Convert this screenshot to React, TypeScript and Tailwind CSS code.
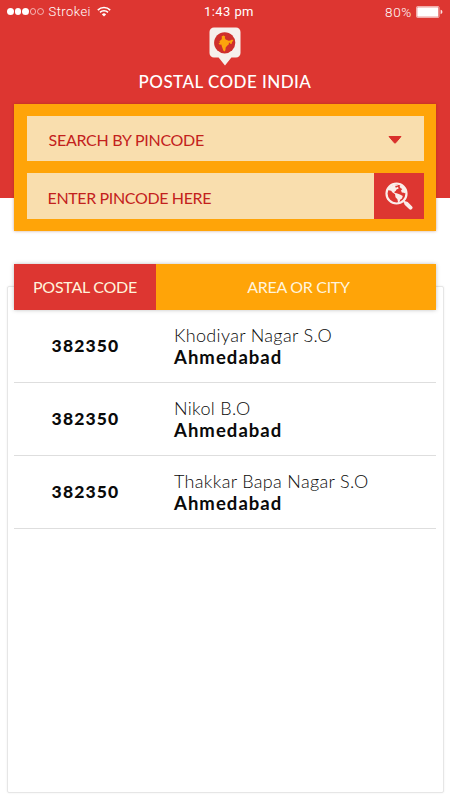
import { clsx } from "clsx";

interface PostalRecord {
  code: string;
  area: string;
  city: string;
}

const records: PostalRecord[] = [
  { code: "382350", area: "Khodiyar Nagar S.O", city: "Ahmedabad" },
  { code: "382350", area: "Nikol B.O", city: "Ahmedabad" },
  { code: "382350", area: "Thakkar Bapa Nagar S.O", city: "Ahmedabad" },
];

function SignalDots() {
  return (
    <div className="flex gap-px">
      {[true, true, true, false, false].map((filled, i) => (
        <span
          key={i}
          className={clsx("h-[6.5px] w-[6.5px] rounded-full border border-white/60", filled && "bg-white")}
        />
      ))}
    </div>
  );
}

function WifiIcon() {
  return (
    <svg width="14" height="11" viewBox="0 0 14 11" fill="none" stroke="#fff" strokeWidth="1.6">
      <path d="M0.8 4.1a8.8 8.8 0 0 1 12.4 0" />
      <path d="M3 6.4a5.7 5.7 0 0 1 8 0" />
      <path d="M7 10.6L4.9 8.4a3 3 0 0 1 4.2 0z" fill="#fff" stroke="none" />
    </svg>
  );
}

function BatteryIcon() {
  return (
    <svg width="28" height="12" viewBox="0 0 28 12">
      <rect x="0.5" y="0.5" width="22.5" height="11" rx="1" fill="none" stroke="#fff" strokeOpacity="0.6" />
      <rect x="1.2" y="1.2" width="21" height="9.6" rx="0.5" fill="#fff" />
      <path d="M24.6 3.8c2.4 0.6 2.4 3.8 0 4.4z" fill="#fff" fillOpacity="0.85" />
    </svg>
  );
}

function StatusBar() {
  return (
    <div className="grid h-[23px] grid-cols-3 items-center pl-[7px] pr-[6px] text-[13px] text-white">
      <div className="flex items-center">
        <SignalDots />
        <span className="ml-[5px] font-['Roboto'] text-[13px] font-light tracking-[0.45px]">Strokei</span>
        <span className="ml-[6px]">
          <WifiIcon />
        </span>
      </div>
      <span className="pl-[7px] text-center font-['Roboto'] tracking-[0.4px]">1:43 pm</span>
      <div className="flex items-center justify-end gap-1">
        <span className="font-['Roboto'] text-[13.5px] leading-[18px] font-light tracking-[0.7px]">80%</span>
        <BatteryIcon />
      </div>
    </div>
  );
}

function PinLogo() {
  return (
    <svg className="shrink-0" width="32" height="40" viewBox="0 0 32 40">
      <path
        d="M5 0.5h22a4.5 4.5 0 0 1 4.5 4.5v21a4.5 4.5 0 0 1-4.5 4.5h-4.6L16 38.6 9.6 30.5H5A4.5 4.5 0 0 1 .5 26V5A4.5 4.5 0 0 1 5 .5z"
        fill="#f6f0ec"
      />
      <circle cx="15.7" cy="15.8" r="10.6" fill="#cf2f2c" />
      <path
        d="M12.6 9.4l1.8-.8 1.8.8-.4 1.5.9 1.6 3 1.3 1.5-.2 2-1 1.2.8-1.3 1.6-.6 1.9-1.1.1-.3-1.2-1.3-.1.1 1.6-1.8 1.5-1.4 1.7-.3 2.8-1 1.3-1.1-1-1.5-4.4-.5-1.6-1.4.2-1.4-1.4 1.4-.7-.5-1.4 2.1-1.7.4-1.6z"
        fill="#fca30c"
      />
    </svg>
  );
}

function GlobeSearchIcon() {
  return (
    <svg width="28" height="28" viewBox="0 0 28 28">
      <circle cx="11.5" cy="11.5" r="10" fill="none" stroke="#faeeea" strokeWidth="2.2" />
      <path d="M18.6 19l1.8 1.8" stroke="#faeeea" strokeWidth="2" />
      <path d="M21.3 21.5l4.2 4.1" stroke="#faeeea" strokeWidth="4" strokeLinecap="round" />
      <path
        d="M2.5 8C4 4.5 7.5 2.5 11 2.2l2 .5-.6 1.1-1.8-.1-.5 1.5 1.7.4 1.1-.9.8 1.7-2.2 1.2-.8 1.5-1.5.8.7 1 1.8.4.3.9-2.2-.2-2.3-1.5-1.4-1.8z"
        fill="#faeeea"
      />
      <path d="M10 12l2.4-.5 2.6.9 2.8 1.5-.8 2.5-1.8 1.4-.9 2.6-1.2.2-.7-3.4-1.9-2z" fill="#faeeea" />
      <path d="M15.6 2.8l3.2 2.2 2.2 4.3-.5 2.3-1.7-.9-2-.3-.8-1.8 1.3-1.5-1.5-.9-1.2-1.4z" fill="#faeeea" />
    </svg>
  );
}

function SearchPanel() {
  return (
    <div className="mx-[14px] mt-[11px] flex h-[127px] flex-col gap-3 bg-[#ffa408] px-[13px] pt-3 text-[16px] text-[#c3211c] shadow-[0_0_3px_rgba(120,40,0,0.4)]">
      <button className="flex h-[45px] w-[397px] shrink-0 items-center justify-between bg-[#f9deae] pl-[21.5px] pr-[22px] text-left">
        <span className="mt-[3px] tracking-[-0.27px]">SEARCH BY PINCODE</span>
        <svg className="mt-[2px]" width="14" height="8" viewBox="0 0 14 8">
          <path d="M1 .5h12L7.7 6.8a1 1 0 0 1-1.4 0z" fill="#d9302c" stroke="#d9302c" strokeLinejoin="round" />
        </svg>
      </button>
      <div className="flex h-[46px] w-[397px]">
        <div className="flex w-[347px] items-center bg-[#f9deae] pl-[20.5px]">
          <span className="mt-[3px] tracking-[-0.36px]">ENTER PINCODE HERE</span>
        </div>
        <button className="flex flex-1 items-center justify-center bg-[#dd3631]" aria-label="Search">
          <GlobeSearchIcon />
        </button>
      </div>
    </div>
  );
}

function ResultRow({ code, area, city }: PostalRecord) {
  return (
    <li className="flex h-[73px] items-center border-b border-[#dedede] text-[#0a0a0a]">
      <span className="w-[142px] pl-px text-center text-[17.5px] font-black tracking-[1.15px]">{code}</span>
      <div className="-mt-px pl-[18px]">
        <p className="text-[18px] leading-[22px] font-light tracking-[0.33px]">{area}</p>
        <p className="text-[18.5px] leading-[22px] font-bold tracking-[1.05px]">{city}</p>
      </div>
    </li>
  );
}

export default function App() {
  return (
    <div className="flex h-[800px] w-[450px] flex-col overflow-hidden bg-white font-['Lato','Open_Sans',sans-serif]">
      <header className="h-[198px] shrink-0 bg-[#dd3631]">
        <StatusBar />
        <div className="flex h-[70px] flex-col items-center pt-[3.5px]">
          <PinLogo />
          <h1 className="mt-[3px] shrink-0 text-[17px] leading-[24px] font-medium tracking-[0.45px] text-white">
            POSTAL CODE INDIA
          </h1>
        </div>
        <SearchPanel />
      </header>

      <main className="mx-[6.5px] mt-[88px] h-[507px] shrink-0 rounded-[2px] border border-[#e6e6e6] px-[6.5px] shadow-[0_0_2px_rgba(0,0,0,0.08)]">
        <div className="-mt-[23px] flex h-[46px] text-[16px] text-[#fff4dc] shadow-[0_0_4px_rgba(0,0,0,0.25)]">
          <div className="flex w-[142px] items-center justify-center bg-[#dd3631] tracking-[-0.25px]">POSTAL CODE</div>
          <div className="flex flex-1 items-center justify-center bg-[#ffa408] pl-[5px] tracking-[-0.3px]">
            AREA OR CITY
          </div>
        </div>
        <ul>
          {records.map((record) => (
            <ResultRow key={record.area} {...record} />
          ))}
        </ul>
      </main>
    </div>
  );
}
